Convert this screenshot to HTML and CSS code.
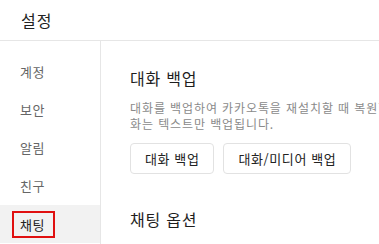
FILE: index.html
```html
<!DOCTYPE html>
<html lang="ko">
<head>
  <meta charset="UTF-8" />
  <meta name="viewport" content="width=device-width, initial-scale=1.0"/>
  <title>설정</title>
  <link rel="stylesheet" href="styles.css">
</head>
<body>

  <div class="settings">
    <div class="settings-header">설정</div>

    <div class="settings-body">
      <div class="sidebar">
        <div class="menu-item">계정</div>
        <div class="menu-item">보안</div>
        <div class="menu-item">알림</div>
        <div class="menu-item">친구</div>
        <div class="menu-item active"><span class="mark">채팅</span></div>
      </div>

      <div class="content">
        <div class="section-title">대화 백업</div>
        <p class="section-desc">대화를 백업하여 카카오톡을 재설치할 때 복원할 수 있습니다. 대화는 텍스트만 백업됩니다.</p>
        <div class="button-row">
          <button class="btn">대화 백업</button>
          <button class="btn">대화/미디어 백업</button>
        </div>

        <div class="section-title next">채팅 옵션</div>
      </div>
    </div>
  </div>

</body>
</html>
```

FILE: styles.css
```css
html, body {
  margin: 0;
  padding: 0;
  background: #ffffff;
  overflow: hidden;
}
body {
  font-family: "Noto Sans CJK KR", "Noto Sans", sans-serif;
  color: #222222;
  width: 379px;
  height: 244px;
}
.settings {
  height: 100%;
  display: flex;
  flex-direction: column;
}
.settings-header {
  height: 40px;
  line-height: 40px;
  padding-left: 21px;
  font-size: 16px;
  letter-spacing: 1px;
  border-bottom: 1px solid #e6e6e6;
  flex-shrink: 0;
}
.settings-body {
  display: flex;
  flex: 1;
}
.sidebar {
  width: 100px;
  flex-shrink: 0;
  border-right: 1px solid #e6e6e6;
  padding-top: 12px;
}
.menu-item {
  height: 38px;
  line-height: 38px;
  padding-left: 20px;
  font-size: 13px;
  letter-spacing: 0.5px;
  color: #666666;
}
.menu-item.active {
  background: #f2f2f2;
  color: #222222;
  display: flex;
  align-items: center;
}
.mark {
  display: inline-block;
  line-height: 15px;
  padding: 4px 8px 4px 6px;
  margin-left: -8px;
  border: 2px solid #e01010;
}
.content {
  flex-shrink: 0;
  width: 350px;
  padding: 26px 0 0 29px;
}
.section-title {
  font-size: 16px;
  line-height: 22px;
  letter-spacing: 0.8px;
  color: #1e1e1e;
}
.section-title.next {
  margin-top: 34px;
}
.section-desc {
  margin: 11px 0 0;
  font-size: 12px;
  line-height: 16px;
  letter-spacing: 0.9px;
  word-break: break-all;
  color: #8a8a8a;
}
.button-row {
  display: flex;
  gap: 9px;
  margin-top: 11px;
}
.btn {
  height: 31px;
  padding: 0 14px;
  font-family: inherit;
  font-size: 13px;
  letter-spacing: 0.6px;
  color: #222222;
  background: #ffffff;
  border: 1px solid #e2e2e2;
  border-radius: 4px;
}
```
